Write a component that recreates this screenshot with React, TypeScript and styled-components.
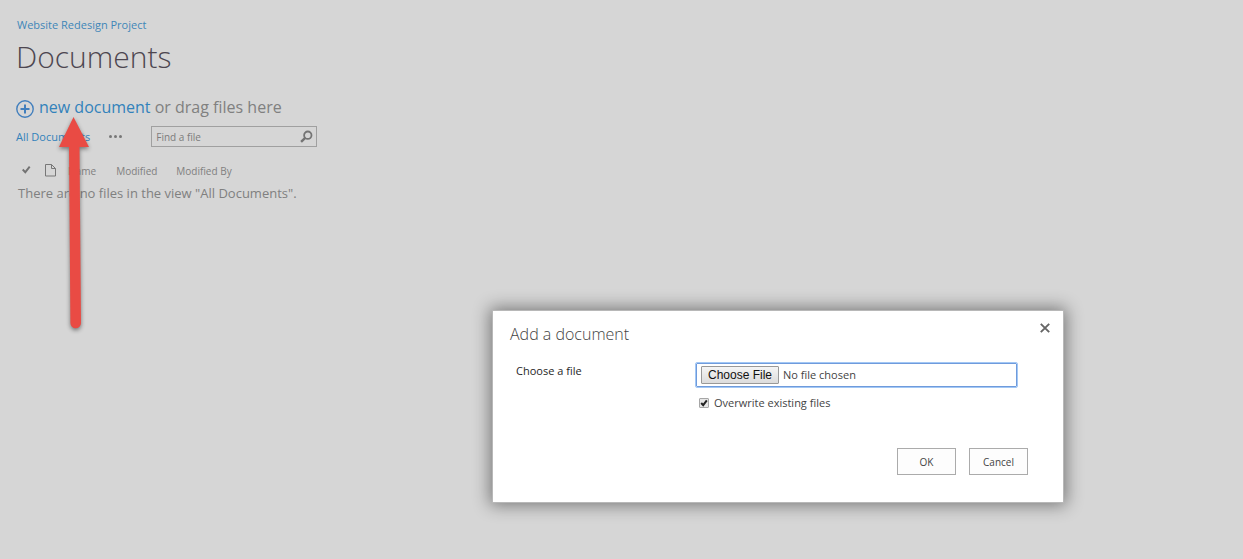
import React from "react";
import styled, { createGlobalStyle } from "styled-components";

const GlobalStyle = createGlobalStyle`
  * { box-sizing: border-box; }
  body {
    margin: 0;
    background: #d6d6d6;
    color: #808080;
    font: 11px/16px "Segoe UI", "Open Sans", "Noto Sans", sans-serif;
  }
`;

const Page = styled.main`
  position: relative;
  min-height: 100vh;
  padding: 17px 16px;
`;

const SiteLink = styled.a`
  display: block;
  width: fit-content;
  margin-left: 1px;
  color: #3f86b8;
  text-decoration: none;
`;

const PageTitle = styled.h1`
  margin: 4px 0 0;
  color: #4d4650;
  font-size: 30px;
  font-weight: 300;
  line-height: 40px;
`;

const NewDocument = styled.div`
  display: flex;
  align-items: center;
  gap: 5px;
  margin-top: 18px;
  font-size: 16px;
  line-height: 24px;
`;

const AccentLink = styled.a`
  color: #3282bb;
  text-decoration: none;
`;

const PlusIcon = styled.svg`
  display: block;
  width: 18px;
  height: 18px;
  margin-top: 4px;
`;

const ViewBar = styled.div`
  display: flex;
  align-items: center;
  margin-top: 7px;
`;

const MoreButton = styled.button`
  display: flex;
  margin-left: 19px;
  padding: 0;
  border: 0;
  background: none;
`;

const SearchBox = styled.form`
  display: flex;
  align-items: center;
  width: 166px;
  height: 21px;
  margin-left: 29px;
  padding: 0 3px 0 4px;
  border: 1px solid #a0a0a0;
`;

const SearchInput = styled.input`
  flex: 1;
  min-width: 0;
  padding: 0;
  border: 0;
  outline: 0;
  background: none;
  color: #7c7c7c;
  font: inherit;
  font-size: 10px;
  &::placeholder { color: #7c7c7c; opacity: 1; }
`;

const SearchButton = styled.button`
  display: flex;
  padding: 0;
  border: 0;
  background: none;
`;

const FileTable = styled.table`
  margin-top: 13px;
  border-collapse: collapse;
  text-align: left;
`;

const HeadCell = styled.th<{ $width: number }>`
  width: ${(p) => p.$width}px;
  height: 22px;
  padding: 0;
  font-size: 10px;
  font-weight: 400;
  white-space: nowrap;
  svg { display: block; }
`;

const EmptyCell = styled.td`
  height: 22px;
  padding: 0 0 0 2px;
  font-size: 13px;
  line-height: 20px;
  white-space: nowrap;
`;

const Arrow = styled.svg`
  position: absolute;
  top: 110px;
  left: 50px;
  width: 50px;
  height: 230px;
  filter: drop-shadow(0 2px 2px rgba(0, 0, 0, 0.45));
  pointer-events: none;
`;

const Dialog = styled.section`
  position: absolute;
  right: 180px;
  bottom: 57px;
  width: 570px;
  padding: 12px 35px 27px 17px;
  background: #fff;
  color: #444;
  box-shadow: 0 0 0 1px #b8b8b8, 0 0 16px 3px rgba(0, 0, 0, 0.45);
`;

const DialogTitle = styled.h2`
  margin: 0;
  color: #444;
  font-size: 16px;
  font-weight: 300;
  line-height: 22px;
`;

const CloseButton = styled.button`
  position: absolute;
  top: 12px;
  right: 13px;
  display: flex;
  padding: 0;
  border: 0;
  background: none;
`;

const FormRow = styled.div`
  display: flex;
  justify-content: space-between;
  margin-top: 18px;
  padding: 0 11px 0 6px;
`;

const FieldLabel = styled.label`
  color: #262626;
`;

const Fields = styled.div`
  width: 321px;
`;

const FileInput = styled.input`
  display: block;
  width: 100%;
  height: 24px;
  padding: 2px 4px;
  border: 1px solid #6f9bdc;
  border-radius: 1px;
  outline: 1px solid #a3c8f5;
  color: #444;
  font: inherit;
  line-height: 18px;

  &::file-selector-button {
    height: 18px;
    margin: 0 4px 0 0;
    padding: 0 6px;
    border: 1px solid #999;
    border-radius: 1px;
    background: linear-gradient(#f5f5f5, #dcdcdc);
    color: #111;
    font: 12px/16px "Liberation Sans", Arial, sans-serif;
  }
`;

const CheckRow = styled.label`
  display: flex;
  align-items: center;
  gap: 5px;
  margin-top: 8px;
  padding-left: 3px;
`;

const CheckBox = styled.input`
  appearance: none;
  width: 10px;
  height: 10px;
  margin: 0;
  border: 1px solid #a6a6a6;
  border-radius: 1px;
  background: #e6e6e6;
  &:checked {
    background: #e6e6e6
      url("data:image/svg+xml,%3Csvg xmlns='http://www.w3.org/2000/svg' viewBox='0 0 8 8'%3E%3Cpath d='M1.2 4 3.2 6.2 6.8 1.4' fill='none' stroke='%23222' stroke-width='2'/%3E%3C/svg%3E")
      center / 8px 8px no-repeat;
  }
`;

const Actions = styled.div`
  display: flex;
  justify-content: flex-end;
  gap: 13px;
  margin-top: 37px;
`;

const ActionButton = styled.button`
  width: 59px;
  height: 27px;
  padding: 0;
  border: 1px solid #ababab;
  background: #fdfdfd;
  color: #444;
  font: inherit;
  font-size: 10px;
`;

export default function App() {
  return (
    <>
      <GlobalStyle />
      <Page>
        <SiteLink href="#">Website Redesign Project</SiteLink>
        <PageTitle>Documents</PageTitle>
        <NewDocument>
          <PlusIcon viewBox="0 0 18 18" fill="none" stroke="#427fbd" aria-hidden="true">
            <circle cx="9" cy="9" r="8.2" strokeWidth="1.4" />
            <path d="M9 4.5v9M4.5 9h9" strokeWidth="2" />
          </PlusIcon>
          <span>
            <AccentLink href="#">new document</AccentLink> or drag files here
          </span>
        </NewDocument>
        <ViewBar>
          <AccentLink href="#">All Documents</AccentLink>
          <MoreButton aria-label="More views">
            <svg width="13" height="3" viewBox="0 0 13 3" fill="#777">
              <circle cx="1.5" cy="1.5" r="1.5" />
              <circle cx="6.5" cy="1.5" r="1.5" />
              <circle cx="11.5" cy="1.5" r="1.5" />
            </svg>
          </MoreButton>
          <SearchBox>
            <SearchInput aria-label="Find a file" placeholder="Find a file" />
            <SearchButton type="button" aria-label="Search">
              <svg width="13" height="13" viewBox="0 0 13 13" fill="none" stroke="#747474">
                <circle cx="7.8" cy="5.2" r="3.7" strokeWidth="1.8" />
                <path d="M5.2 7.9 1.1 11.9" strokeWidth="2.4" />
              </svg>
            </SearchButton>
          </SearchBox>
        </ViewBar>
        <FileTable>
          <thead>
            <tr>
              <HeadCell $width={29} aria-label="Selected">
                <svg width="16" height="14" viewBox="0 0 16 14" fill="none" stroke="#737373">
                  <path d="M6.7 5.5 9.3 8.2 13.7 2.6" strokeWidth="1.9" />
                </svg>
              </HeadCell>
              <HeadCell $width={23} aria-label="Type">
                <svg width="11" height="14" viewBox="0 0 11 14" fill="none" stroke="#777">
                  <path d="M.5.5h6l4 4v7.5H.5zM6.5.5v4h4" />
                </svg>
              </HeadCell>
              <HeadCell $width={48}>Name</HeadCell>
              <HeadCell $width={60}>Modified</HeadCell>
              <HeadCell $width={120}>Modified By</HeadCell>
            </tr>
          </thead>
          <tbody>
            <tr>
              <EmptyCell colSpan={5}>There are no files in the view "All Documents".</EmptyCell>
            </tr>
          </tbody>
        </FileTable>
        <Arrow viewBox="0 0 50 230" fill="#e94b44" aria-hidden="true">
          <path d="M23.5 7 39 37h-9.5L31 213a5.3 5.3 0 0 1-10.6 0L19 37H9z" />
        </Arrow>
        <Dialog role="dialog" aria-labelledby="dialog-title">
          <DialogTitle id="dialog-title">Add a document</DialogTitle>
          <CloseButton aria-label="Close">
            <svg width="10" height="10" viewBox="0 0 10 10" stroke="#666" strokeWidth="1.9">
              <path d="M.8.8l8.4 8.4M9.2.8.8 9.2" />
            </svg>
          </CloseButton>
          <FormRow>
            <FieldLabel htmlFor="file">Choose a file</FieldLabel>
            <Fields>
              <FileInput id="file" type="file" />
              <CheckRow>
                <CheckBox type="checkbox" defaultChecked />
                Overwrite existing files
              </CheckRow>
            </Fields>
          </FormRow>
          <Actions>
            <ActionButton>OK</ActionButton>
            <ActionButton>Cancel</ActionButton>
          </Actions>
        </Dialog>
      </Page>
    </>
  );
}
